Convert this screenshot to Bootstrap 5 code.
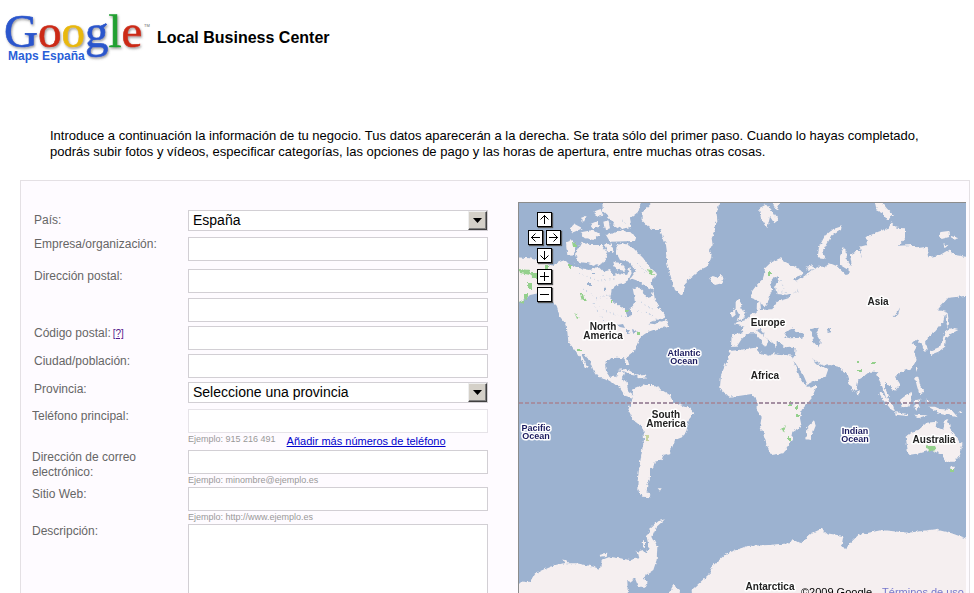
<!DOCTYPE html>
<html lang="es">
<head>
<meta charset="utf-8">
<meta name="viewport" content="width=device-width, initial-scale=1">
<title>Google Local Business Center</title>
<link href="https://cdn.jsdelivr.net/npm/bootstrap@5.3.0/dist/css/bootstrap.min.css" rel="stylesheet">
<style>
  body { font-family: "Liberation Sans", Arial, sans-serif; font-size: 12px; line-height: 15px; color: #000; background: #fff; }
  .brand-bar { padding: 8px 4px 0; }
  .brand-bar svg { overflow: visible; }
  .brand-title { font-size: 16px; line-height: 20px; font-weight: 700; margin: 20px 0 0 3px; }
  .intro { font-size: 13px; line-height: 16px; margin: 60px 50px 20px; }
  .panel { margin: 0 4px 0 20px; border: 1px solid #e4e0e4; border-bottom: 0; background: #fefbff; padding: 21px 3px 0 11px; gap: 30px; min-height: 0; }
  .biz-form { padding-top: 8px; min-height: 0; }
  .sp-4 { margin-bottom: 4px; }
  .sp-5 { margin-bottom: 5px; }
  .sp-6 { margin-bottom: 6px; }
  .sp-8 { margin-bottom: 8px; }
  .cap { width: 156px; color: #666; padding-right: 36px; flex: none; }
  .cap.inset { padding-left: 2px; padding-right: 0; }
  .cap.low { padding-top: 3px; }
  .help { font-size: 10px; color: #551a8b; margin-left: 2px; }
  .entry { width: 300px; }
  .field { border: 1px solid #d2cfd4; border-radius: 0; background: #fff; height: 24px; padding: 0 4px; font-size: 13px; color: #000; display: block; width: 100%; }
  .field.pale { border-color: #e6e3e8; }
  textarea.field { height: 150px; resize: none; }
  select.field { appearance: none; height: 21px; font-size: 14px; line-height: 19px; }
  .drop { top: 1px; right: 1px; width: 19px; height: 19px; background: #d4d0c8; border: 1px solid; border-color: #eee #404040 #404040 #eee; box-shadow: inset -1px -1px #808080; pointer-events: none; }
  .hint { font-size: 9px; line-height: 13px; color: #999; }
  .more { font-size: 11px; line-height: 17px; color: #00c; margin-left: 11px; }
  .map { border: solid #8c8c8c; border-width: 1px 0 0 1px; background: #9cb2d0; min-width: 0; }
  .nav-pad { top: 9px; left: 9px; gap: 3px; }
  .nav-pad div { gap: 3px; }
  .nav-btn { width: 15px; height: 15px; padding: 0; border: 1px solid #000; background: #fff; box-shadow: 1px 1px 1px #555; line-height: 0; display: block; }
  .nav-btn svg { display: block; }
  .zoom-in { margin-top: 3px; }
  .legal { right: 2px; bottom: -7px; gap: 10px; font-size: 11px; line-height: 15px; }
  .legal a { color: #7777cc; }
  .place { font: 700 10px "Liberation Sans", Arial, sans-serif; fill: #222; stroke: #fff; stroke-width: 3px; stroke-linejoin: round; paint-order: stroke; text-anchor: middle; }
  .sea { font-size: 9px; fill: #1c1c60; }
</style>
<script src="https://cdn.jsdelivr.net/npm/bootstrap@5.3.0/dist/js/bootstrap.bundle.min.js"></script>
</head>
<body class="vh-100 overflow-hidden d-flex flex-column">
<header class="brand-bar d-flex align-items-start">
  <svg width="150" height="60" role="img" aria-label="Google Maps España">
    <defs>
      <filter id="bevel" x="-5%" y="-10%" width="115%" height="130%"><feDropShadow dx="1" dy="1.5" stdDeviation="1" flood-color="#555" flood-opacity=".6"/></filter>
    </defs>
    <text x="0" y="39" font-family="Liberation Serif, serif" font-size="47" filter="url(#bevel)" stroke-width=".6"><tspan fill="#2a56cc" stroke="#2a56cc">G</tspan><tspan fill="#cc2c18" stroke="#cc2c18">o</tspan><tspan fill="#e8b810" stroke="#e8b810">o</tspan><tspan fill="#2a56cc" stroke="#2a56cc">g</tspan><tspan fill="#20a030" stroke="#20a030">l</tspan><tspan fill="#cc2c18" stroke="#cc2c18">e</tspan></text>
    <text x="140" y="19" font-family="Liberation Sans, sans-serif" font-size="4" fill="#666">TM</text>
    <text x="4" y="52" font-family="Liberation Sans, sans-serif" font-size="12" font-weight="700" fill="#2a5fd8" stroke="#fff" stroke-width="2" paint-order="stroke">Maps España</text>
  </svg>
  <h1 class="brand-title">Local Business Center</h1>
</header>

<p class="intro">Introduce a continuación la información de tu negocio. Tus datos aparecerán a la derecha. Se trata sólo del primer paso. Cuando lo hayas completado, podrás subir fotos y vídeos, especificar categorías, las opciones de pago y las horas de apertura, entre muchas otras cosas.</p>

<main class="panel d-flex flex-grow-1">
  <form class="biz-form flex-shrink-0 overflow-hidden">
    <div class="d-flex sp-6">
      <label class="cap inset low" for="pais">País:</label>
      <div class="entry position-relative">
        <select class="field" id="pais"><option>España</option></select>
        <span class="drop position-absolute d-flex align-items-center justify-content-center"><svg width="9" height="5"><path d="M0 0H9L4.500 5Z"/></svg></span>
      </div>
    </div>
    <div class="d-flex sp-8">
      <label class="cap inset" for="empresa">Empresa/organización:</label>
      <div class="entry"><input class="field" id="empresa" type="text"></div>
    </div>
    <div class="d-flex sp-5">
      <label class="cap inset" for="dir1">Dirección postal:</label>
      <div class="entry"><input class="field" id="dir1" type="text"></div>
    </div>
    <div class="d-flex sp-4">
      <span class="cap inset"></span>
      <div class="entry"><input class="field" type="text" aria-label="Dirección postal, línea 2"></div>
    </div>
    <div class="d-flex sp-4">
      <div class="cap inset"><label for="cp">Código postal:</label><a class="help" href="#">[?]</a></div>
      <div class="entry"><input class="field" id="cp" type="text"></div>
    </div>
    <div class="d-flex sp-4">
      <label class="cap inset" for="ciudad">Ciudad/población:</label>
      <div class="entry"><input class="field" id="ciudad" type="text"></div>
    </div>
    <div class="d-flex sp-6">
      <label class="cap inset" for="prov">Provincia:</label>
      <div class="entry position-relative">
        <select class="field" id="prov"><option>Seleccione una provincia</option></select>
        <span class="drop position-absolute d-flex align-items-center justify-content-center"><svg width="9" height="5"><path d="M0 0H9L4.500 5Z"/></svg></span>
      </div>
    </div>
    <div class="d-flex">
      <label class="cap" for="tel">Teléfono principal:</label>
      <div class="entry"><input class="field pale" id="tel" type="tel">
        <div class="d-flex"><span class="hint">Ejemplo: 915 216 491</span><a class="more" href="#">Añadir más números de teléfono</a></div>
      </div>
    </div>
    <div class="d-flex">
      <label class="cap" for="mail">Dirección de correo electrónico:</label>
      <div class="entry"><input class="field" id="mail" type="email"><div class="hint">Ejemplo: minombre@ejemplo.es</div></div>
    </div>
    <div class="d-flex">
      <label class="cap" for="web">Sitio Web:</label>
      <div class="entry"><input class="field" id="web" type="url"><div class="hint">Ejemplo: http://www.ejemplo.es</div></div>
    </div>
    <div class="d-flex">
      <label class="cap" for="desc">Descripción:</label>
      <div class="entry"><textarea class="field" id="desc"></textarea></div>
    </div>
  </form>

  <section class="map position-relative flex-grow-1 overflow-hidden" aria-label="Mapa">
    <svg class="d-block w-100 h-100">
      <defs>
        <filter id="coast" x="-5%" y="-5%" width="110%" height="110%"><feTurbulence type="fractalNoise" baseFrequency=".28" numOctaves="2" seed="4"/><feDisplacementMap in="SourceGraphic" scale="4" xChannelSelector="R" yChannelSelector="G"/><feGaussianBlur stdDeviation=".3"/></filter>
      </defs>
      <g filter="url(#coast)" fill="#f5eff0">
        <!-- North America, Greenland and the Arctic islands -->
        <g transform="translate(-9 -8) scale(.333333)">
          <path d="M425 0L425 24 395 55 395 75 415 95 430 105 450 105 460 130 468 150 472 180 470 200 478 230 487 260 495 285 515 302 522 290 525 265 545 245 570 225 590 215 600 200 605 180 600 165 608 150 605 130 615 110 612 95 622 80 620 55 628 24 628 0Z"/>
          <path d="M598 250L608 243 620 247 635 240 643 252 635 265 615 270 603 260Z"/>
          <path d="M0 185L60 190 95 200 125 212 150 200 165 195 180 210 210 220 240 225 265 215 280 230 300 225 310 240 330 235 350 240 360 215 365 235 355 255 340 265 325 268 305 285 300 315 325 330 345 345 355 365 365 360 362 340 375 325 372 300 368 280 385 275 400 290 410 310 425 305 430 285 435 315 445 335 460 350 465 365 440 375 415 385 435 388 450 378 460 380 473 392 450 400 430 405 415 410 400 420 390 430 380 450 375 465 360 478 350 485 358 510 350 510 342 490 320 488 300 490 285 505 288 530 300 545 318 545 325 530 342 530 335 553 350 560 355 590 370 602 385 575 400 568 430 580 450 582 458 600 370 610 345 602 330 580 310 565 285 550 265 545 250 525 240 500 225 480 215 480 225 500 236 522 228 520 210 485 190 460 175 440 172 410 170 390 150 365 140 335 125 320 110 300 85 295 60 300 45 312 20 325 0 330Z"/>
          <path d="M215 140L240 150 275 150 292 175 285 200 260 212 235 205 205 200 195 180 205 160ZM168 145L185 133 198 150 188 182 172 180ZM320 150L345 145 370 160 400 190 415 212 440 235 425 262 432 285 410 275 385 258 362 250 378 228 355 200 330 195 318 172ZM275 15L395 15 385 50 360 70 365 95 335 102 315 92 300 70 280 50ZM288 120L320 112 330 105 378 120 372 138 300 140ZM178 105L195 88 218 100 190 112ZM212 112L250 105 270 118 250 135 222 128ZM210 70L230 62 222 80ZM240 88L262 78 270 95 250 100ZM250 50L272 42 280 62 262 65ZM282 150L305 145 310 170 292 172ZM310 200L335 205 345 228 315 222ZM280 80L295 76 300 100 285 105ZM445 388L468 375 475 392 458 398Z"/>
          <path d="M322 525L350 522 372 535 385 542 365 540 345 530ZM380 542L405 540 410 547 388 550Z"/>
        </g>
        <!-- Europe, Asia and Africa -->
        <g transform="translate(216 -8) scale(.333333)">
          <path d="M-10 418L20 415 25 395 0 388 5 382 30 376 45 362 65 350 66 325 76 318 78 345 112 343 125 320 160 310 170 295 190 290 182 262 205 245 230 225 250 215 270 215 285 205 310 215 335 240 345 235 340 225 315 210 315 180 325 160 335 170 335 200 350 210 345 180 370 165 380 190 375 155 395 150 395 125 430 110 460 100 470 82 485 98 510 100 510 130 490 152 530 150 545 160 575 155 580 187 615 180 640 165 660 180 720 190 720 300 670 305 640 308 625 325 607 345 632 350 625 380 600 410 580 425 570 440 578 465 568 467 560 445 540 435 530 445 545 455 537 470 545 495 530 520 500 530 480 545 495 570 480 587 465 575 450 560 450 580 462 605 453 607 440 570 430 550 425 530 405 530 385 545 370 555 365 580 358 590 345 570 335 535 320 525 310 515 285 510 270 512 250 505 232 490 240 505 262 515 280 522 272 545 235 560 216 570 205 545 180 510 172 492 180 480 182 457 165 455 150 457 138 445 125 440 125 460 115 445 95 430 75 402 66 407 90 425 100 440 90 456 82 440 60 415 40 415 20 432 5 455 -12 455Z"/>
          <path d="M50 290L48 308 65 315 80 325 88 337 100 320 105 300 112 285 104 265 120 245 130 250 120 275 125 297 155 299 188 290 190 265 175 250 202 240 200 228 180 215 150 200 135 190 110 200 90 220 85 250 65 270Z"/>
          <path d="M2 318L15 314 20 338 32 355 28 370 5 378 12 358 2 342ZM-13 352L0 342 2 360 -10 368Z"/>
          <path d="M248 190L252 155 270 122 295 102 320 94 318 105 290 122 275 148 262 172 272 192ZM72 40L95 28 110 45 130 75 118 85 105 65 97 100 78 70ZM105 15L140 15 125 45ZM418 15L440 20 455 40 475 60 455 74 445 55 425 45ZM612 112L640 108 643 126 620 132ZM650 122L670 130 655 134ZM625 145L637 152 628 156ZM630 412L648 400 670 405 645 418 633 428 630 455 610 470 585 480 585 468 615 455 622 435ZM631 350L638 355 642 385 638 402 633 375ZM543 515L548 516 543 528ZM540 545L550 545 555 570 565 590 553 598 545 570ZM366 585L375 590 370 602ZM215 215L235 210 238 220 220 228Z"/>
          <path d="M-15 468L65 458 70 470 100 482 120 475 170 482 182 515 200 550 215 575 245 573 238 590 230 610 200 645 195 670 200 695 175 710 170 735 160 755 145 775 110 780 95 750 85 715 75 695 80 665 65 645 65 615 50 597 10 603 -20 605 -38 590 -45 575 -42 540 -25 500Z"/>
          <path d="M238 677L242 692 225 735 214 733 217 700Z"/>
          <g fill="#9cb2d0"><path d="M148 425L155 408 175 400 182 412 205 415 202 428 165 430ZM228 402L252 398 242 414 257 440 250 457 235 440ZM276 402L288 400 288 412 278 414ZM473 365L488 350 496 336 490 355 478 366ZM175 495L205 540 217 568 210 568 195 548ZM165 620L175 622 172 632 164 630Z"/></g>
        </g>
        <!-- South America and western Antarctica -->
        <g transform="translate(-9 187) scale(.333333)">
          <path d="M368 10L370 20 362 38 355 60 370 90 400 115 402 150 395 190 388 230 383 270 382 300 400 320 425 322 410 305 412 285 420 265 420 235 430 230 435 215 455 210 460 195 480 190 495 150 520 140 530 120 535 90 553 70 540 55 510 45 490 40 480 15 455 0 430 -15 395 -15 372 -5Z"/>
          <path d="M0 575L40 578 60 575 75 550 120 530 160 520 200 520 250 530 270 537 275 510 300 500 360 510 385 505 380 485 400 480 410 492 416 470 410 440 420 415 440 395 465 388 440 410 427 440 442 470 440 510 430 540 400 560 413 575 405 590 385 590 375 565 360 575 352 572 355 650 0 650ZM160 508L175 518 165 522ZM265 492L292 488 290 498 268 500ZM395 455L405 450 405 475 398 470ZM443 295L455 295 450 302Z"/>
          <path d="M475 612L490 585 510 600 505 650 475 650ZM548 650L545 600 600 550 605 530 650 490 700 473 700 650Z"/>
        </g>
        <!-- Oceania and eastern Antarctica -->
        <g transform="translate(216 187) scale(.333333)">
          <path d="M0 482L35 468 100 465 165 460 172 448 195 460 230 430 260 416 275 430 325 438 320 465 332 480 345 460 370 435 440 420 490 425 520 428 600 418 650 430 720 455 720 650 0 650Z"/>
          <path d="M520 195L515 160 512 140 530 125 550 120 575 98 605 95 602 110 625 120 630 88 640 92 645 115 665 140 682 165 675 195 660 215 635 215 620 195 590 180 555 190ZM645 230L660 230 655 245 648 243ZM580 50L600 50 615 57 650 60 668 82 640 75 620 73 605 65ZM495 30L505 22 530 5 530 25 520 50 500 52ZM432 8L442 10 455 25 475 48 480 65 465 55 445 30ZM480 67L520 72 518 78 482 74ZM540 30L560 28 548 38 556 55 547 48 545 60 538 50ZM535 74L575 76 550 84ZM575 25L582 35 576 40ZM672 60L682 68 675 70Z"/>
        </g>
      </g>
      <g fill="#94d08c" filter="url(#coast)">
        <path d="M0 66L12 67 11 72 1 70ZM12 70H19V75H13ZM8 80H13V86H8ZM5 90H9V96H5ZM0 99L6 96 4 101ZM53 39H57V44H54ZM128 66L133 67 135 72 130 71ZM61 91H65L67 98H63ZM26 62H30V66H26ZM50 61H52V66H50ZM55 109L60 115 58 116ZM106 107H109V109H106ZM118 130H121V132H118ZM407 243L415 243 417 247 410 248ZM431 266H435V269H431ZM277 203H279V206H277ZM262 227L267 222 265 229ZM277 211H280V214H277ZM269 233H271V238H269ZM248 69H252V73H248ZM337 158H340V160H337ZM338 167H343V168H338ZM352 159H356V161H352ZM270 199H272V203H270ZM58 146H64V148H58ZM91 98H94V100H91Z"/>
        <path d="M127 232H130V238H127Z" fill="#c8d4a0"/>
      </g>
      <g fill="#9cb2d0" filter="url(#coast)"><path d="M98 122L104 121 106 125 101 124ZM107 127L111 127 109 130 112 131 107 131ZM113 126L118 128 114 131ZM73 69H76V71H73ZM84 85H87V88H84ZM68 80H72V82H68Z"/></g>
      <g fill="none" stroke="#b9c9de" stroke-width="1" stroke-dasharray="1 3" filter="url(#coast)"><path d="M60 70L80 78 98 76M64 86L78 96 92 92M80 104L96 112 108 114M55 60L70 68M118 108L130 110 138 116M122 100L134 106M84 72L88 96M74 100L86 120M118 60L128 70M100 14L112 26M255 86L266 90M262 78L268 94"/></g>
      <line x1="0" y1="200" x2="100%" y2="200" stroke="#a48fa2" stroke-width="2" stroke-dasharray="4 2"/>
      <g class="place">
        <text x="84" y="127">North</text><text x="84" y="136">America</text>
        <text x="147" y="215">South</text><text x="147" y="224">America</text>
        <text x="249" y="123">Europe</text><text x="246" y="176">Africa</text>
        <text x="359" y="102">Asia</text><text x="415" y="240">Australia</text>
        <text x="251" y="387">Antarctica</text>
      </g>
      <g class="place sea">
        <text x="165" y="153">Atlantic</text><text x="165" y="161">Ocean</text>
        <text x="17" y="228">Pacific</text><text x="17" y="236">Ocean</text>
        <text x="336" y="231">Indian</text><text x="336" y="239">Ocean</text>
      </g>
    </svg>
    <div class="nav-pad position-absolute d-flex flex-column align-items-center">
      <button class="nav-btn" type="button" aria-label="Arriba"><svg width="13" height="13" fill="none" stroke="#000"><path d="M6.500 11V2M2.500 6.500L6.500 2.500 10.500 6.500"/></svg></button>
      <div class="d-flex">
        <button class="nav-btn" type="button" aria-label="Izquierda"><svg width="13" height="13" fill="none" stroke="#000"><path d="M11 6.500H2M6.500 2.500L2.500 6.500 6.500 10.500"/></svg></button>
        <button class="nav-btn" type="button" aria-label="Derecha"><svg width="13" height="13" fill="none" stroke="#000"><path d="M2 6.500H11M6.500 2.500L10.500 6.500 6.500 10.500"/></svg></button>
      </div>
      <button class="nav-btn" type="button" aria-label="Abajo"><svg width="13" height="13" fill="none" stroke="#000"><path d="M6.500 2V11M2.500 6.500L6.500 10.500 10.500 6.500"/></svg></button>
      <button class="nav-btn zoom-in" type="button" aria-label="Acercar"><svg width="13" height="13" stroke="#000"><path d="M2 6.500H11M6.500 2V11"/></svg></button>
      <button class="nav-btn" type="button" aria-label="Alejar"><svg width="13" height="13" stroke="#000"><path d="M2 6.500H11"/></svg></button>
    </div>
    <div class="legal position-absolute d-flex"><span>©2009 Google</span><a href="#">Términos de uso</a></div>
  </section>
</main>
</body>
</html>
